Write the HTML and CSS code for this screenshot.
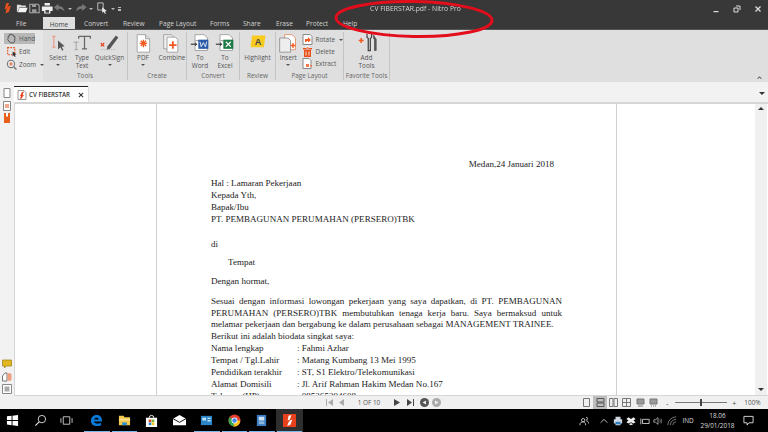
FILE: index.html
```html
<!DOCTYPE html>
<html lang="id">
<head>
<meta charset="utf-8">
<title>CV FIBERSTAR.pdf - Nitro Pro</title>
<link rel="stylesheet" href="styles.css">
</head>
<body>
<div class="app">
  <header class="titlebar">
    <div class="qat">
      <svg class="logo" viewBox="0 0 14 14"><path d="M6 1 9 1 7 7 4 8Z" fill="#e8501c"/><path d="M8 5 11 4 9 11 5 13 6 8Z" fill="#e8501c"/></svg>
      <svg viewBox="0 0 14 14"><path d="M1 3h4l1 1h5v2H4L2 11H1Z" fill="#ddd"/><path d="M4 6.500h9L11 11.500H2Z" fill="#f4f4f4"/></svg>
      <svg viewBox="0 0 14 14"><path d="M2 2.500h9l1.500 1.500v8h-10.500Z" fill="none" stroke="#aaa" stroke-width="1.200"/><path d="M4.500 2.500h4.500v3h-4.500ZM4.500 8h5v4h-5Z" fill="#999"/></svg>
      <svg viewBox="0 0 14 14"><path d="M4 1h6v3H4ZM1 5h12v5h-2.500v3h-7v-3H1Z" fill="#eee"/><path d="M5 9h4v3H5Z" fill="#444"/></svg>
      <svg viewBox="0 0 14 14"><path d="M1 6 6 2v2.500c4 0 6 2 7 6-2-2-4-3-7-3V10Z" fill="#777"/></svg>
      <span class="caret"></span>
      <svg viewBox="0 0 14 14"><path d="M13 6 8 2v2.500c-4 0-6 2-7 6 2-2 4-3 7-3V10Z" fill="#777"/></svg>
      <span class="caret"></span>
      <svg viewBox="0 0 14 14"><path d="M2 1h6v8H2Z" fill="none" stroke="#ccc"/><path d="M7 6l5 4-2 .5 1 2.500-1 .5-1.200-2.500L7 12Z" fill="#eee"/></svg>
      <span class="caret"></span>
      <span class="more"></span>
    </div>
    <div class="title">CV FIBERSTAR.pdf - Nitro Pro</div>
    <div class="winctl">
      <svg class="i10" viewBox="0 0 10 10"><path d="M2.500 7h5v1.200h-5Z" fill="#ddd"/></svg>
      <svg class="i10" viewBox="0 0 10 10"><path d="M4 2h4v4M2 4h4v4H2Z" fill="none" stroke="#ddd"/></svg>
      <svg class="i10" viewBox="0 0 10 10"><path d="M2.500 2.500l5 5M7.500 2.500l-5 5" stroke="#ddd" stroke-width="1.300"/></svg>
    </div>
  </header>

  <nav class="menubar">
    <span class="menu m-file">File</span>
    <span class="menu m-home">Home</span>
    <span class="menu m-convert">Convert</span>
    <span class="menu m-review">Review</span>
    <span class="menu m-layout">Page Layout</span>
    <span class="menu m-forms">Forms</span>
    <span class="menu m-share">Share</span>
    <span class="menu m-erase">Erase</span>
    <span class="menu m-protect">Protect</span>
    <span class="menu m-help">Help</span>
  </nav>

  <section class="ribbon">
    <div class="modes">
      <div class="mode active">
        <svg class="i11" viewBox="0 0 10 10"><path d="M2 5V3h1V1.500h1V1h1v.500h1V2h1v1h1v4l-1 2H4L1.500 6Z" fill="none" stroke="#555" stroke-width=".9"/></svg>Hand</div>
      <div class="mode">
        <svg class="i11" viewBox="0 0 10 10"><rect x="1.500" y="1.500" width="6.500" height="6.500" fill="none" stroke="#e8501c" stroke-dasharray="1.500 1"/><path d="M6 5l3.500 2.500-1.500.5.800 1.500-.8.400L7 8.500 6 9.500Z" fill="#333"/></svg>Edit</div>
      <div class="mode">
        <svg class="i11" viewBox="0 0 10 10"><circle cx="4.500" cy="4.500" r="3.300" fill="none" stroke="#777"/><path d="M7 7l2.500 2.500" stroke="#777" stroke-width="1.300"/><path d="M3 4.500h3M4.500 3v3" stroke="#e8501c" stroke-width=".8"/></svg>Zoom<span class="caret dark"></span></div>
    </div>

    <div class="group g-tools">
      <div class="btns">
        <div class="btn w-select">
          <svg class="i24" viewBox="0 0 24 24"><path d="M5 4h4M5 17h4M7 4v13" stroke="#ee8a70" stroke-width="1.100" fill="none"/><path d="M12 9l8 7-3.500.5 2 4-1.500.7-2-4-3 2.500Z" fill="#555"/></svg>
          <span>Select</span><span class="caret dark"></span></div>
        <div class="btn w-type">
          <svg class="i24" viewBox="0 0 24 24"><path d="M8 4h14v3M15 4v15M12 19h6M8 4v3" stroke="#666" stroke-width="1.500" fill="none"/><path d="M2 11h6M5 11v9M3 20h4" stroke="#999" fill="none"/></svg>
          <span>Type<br>Text</span></div>
        <div class="btn w-sign">
          <svg class="i24" viewBox="0 0 24 24"><path d="M9 16 19 3l3 2.500L12 19l-4 1Z" fill="#555"/><path d="M1 12l4 4M5 12l-4 4" stroke="#e8401c" stroke-width="1.400"/><path d="M1 20h18" stroke="#aaa" stroke-dasharray="1 1"/></svg>
          <span>QuickSign</span><span class="caret dark"></span></div>
      </div>
      <div class="glabel">Tools</div>
    </div>

    <div class="group g-create">
      <div class="btns">
        <div class="btn w-pdf">
          <svg class="i24" viewBox="0 0 24 24"><path d="M5 2h10l5 5v16H5Z" fill="#fff" stroke="#999"/><path d="M15 2v5h5" fill="#ddd" stroke="#999"/><path d="M12.500 8v9M8 12.500h9M9.300 9.300l6.400 6.400M15.700 9.300l-6.400 6.400" stroke="#f05a1e" stroke-width="1.600"/></svg>
          <span>PDF</span><span class="caret dark"></span></div>
        <div class="btn w-combine">
          <svg class="i24" viewBox="0 0 24 24"><path d="M2 2h9l2 2v15H2Z" fill="#eee" stroke="#999"/><path d="M6 5h10l3 3v15H6Z" fill="#fff" stroke="#999"/><path d="M13 10v9M8.500 14.500h9" stroke="#f05a1e" stroke-width="2.200"/></svg>
          <span>Combine</span></div>
      </div>
      <div class="glabel">Create</div>
    </div>

    <div class="group g-convert">
      <div class="btns">
        <div class="btn w-to">
          <svg class="i24" viewBox="0 0 24 24"><path d="M6 2h11l4 4v3H6Z" fill="#fff" stroke="#999"/><path d="M6 9v12h15v-3" fill="#fff" stroke="#999"/><path d="M1 13.500h6" stroke="#444" stroke-width="1.500"/><path d="M6 11l3 2.500-3 2.500Z" fill="#444"/><path d="M10 8h12v11H10Z" fill="#2b5aa8"/><path d="M12 10.500l1.500 6 2.500-5 2.500 5 1.500-6" stroke="#fff" fill="none"/></svg>
          <span>To<br>Word</span></div>
        <div class="btn w-to">
          <svg class="i24" viewBox="0 0 24 24"><path d="M6 2h11l4 4v3H6Z" fill="#fff" stroke="#999"/><path d="M6 9v12h15v-3" fill="#fff" stroke="#999"/><path d="M1 13.500h6" stroke="#444" stroke-width="1.500"/><path d="M6 11l3 2.500-3 2.500Z" fill="#444"/><path d="M10 8h12v11H10Z" fill="#1e7a45"/><path d="M13 10.500l6 6M19 10.500l-6 6" stroke="#fff" stroke-width="1.300"/></svg>
          <span>To<br>Excel</span></div>
      </div>
      <div class="glabel">Convert</div>
    </div>

    <div class="group g-review">
      <div class="btns">
        <div class="btn w-high">
          <svg class="i24" viewBox="0 0 24 24"><path d="M5 3h16l-2 14H3Z" fill="#f9cb20"/><text x="12" y="14" class="hl">A</text></svg>
          <span>Highlight</span></div>
      </div>
      <div class="glabel">Review</div>
    </div>

    <div class="group g-layout">
      <div class="btns">
        <div class="btn w-insert">
          <svg class="i24" viewBox="0 0 24 24"><path d="M8 2h9l4 4v14H8Z" fill="#fff" stroke="#e08a60"/><path d="M2 6h10l3 3v14H2Z" fill="#eee" stroke="#888"/><path d="M18 12v6M15 15h6" stroke="#f05a1e" stroke-width="1.600"/></svg>
          <span>Insert</span><span class="caret dark"></span></div>
        <div class="smalls">
          <div class="small"><svg class="i11" viewBox="0 0 11 11"><path d="M1 .500h7l2 2v8H1Z" fill="#fff" stroke="#888"/><path d="M3 8V5h3V3l3 3-3 2.500V7H4.500v1Z" fill="#f05a1e"/></svg>Rotate<span class="caret dark"></span></div>
          <div class="small"><svg class="i11" viewBox="0 0 11 11"><path d="M1 2h9v1.500H1ZM2 4h7v7H2Z" fill="#e8501c"/><path d="M4 5.500v4M7 5.500v4M4 .500h3V2H4Z" stroke="#fff" stroke-width=".8" fill="#e8501c"/></svg>Delete</div>
          <div class="small"><svg class="i11" viewBox="0 0 11 11"><path d="M1 .500h6l2 2v8H1Z" fill="#fff" stroke="#888"/><path d="M4 6h3v3H4ZM8 7h2v1.500H8Z" fill="#f0784a"/></svg>Extract</div>
        </div>
      </div>
      <div class="glabel">Page Layout</div>
    </div>

    <div class="group g-fav">
      <div class="btns">
        <div class="btn w-add">
          <svg class="i24" viewBox="0 0 24 24"><path d="M2 9h6M5 6v6" stroke="#f05a1e" stroke-width="1.800"/><path d="M12 1v4l1.500 1.500V21h2.500V6.500L17.500 5V1" stroke="#444" stroke-width="1.500" fill="none"/><path d="M20 2v5h1v14h2V7h0" stroke="#555" fill="#555"/></svg>
          <span>Add<br>Tools</span></div>
      </div>
      <div class="glabel">Favorite Tools</div>
    </div>
    <svg class="collapse" viewBox="0 0 6 4"><path d="M0 4 3 1l3 3H4.500L3 2.500 1.500 4Z" fill="#555"/></svg>
  </section>

  <div class="body-row">
    <aside class="rail">
      <div class="railset">
        <svg class="i10" viewBox="0 0 10 10"><path d="M2 .500h6v9H2Z" fill="#fff" stroke="#888"/></svg>
        <svg class="i10" viewBox="0 0 10 10"><path d="M1.500 .500h7v9h-7Z" fill="#fff" stroke="#888"/><path d="M3 4h4M3 6h4" stroke="#e8501c"/></svg>
        <svg class="i10" viewBox="0 0 10 10"><path d="M2 0h6v10H2Z" fill="#e8601c"/><path d="M4 0v4l1-1 1 1V0Z" fill="#fff"/></svg>
      </div>
      <div class="railset">
        <svg class="i10" viewBox="0 0 10 10"><path d="M.500 1h9v6H4L2.500 9V7H.500Z" fill="#e3b81f" stroke="#9a7c10" stroke-width=".7"/></svg>
        <svg class="i10" viewBox="0 0 10 10"><path d="M.500 4 3 1h2v8H.500Z" fill="#fff" stroke="#777"/><rect x="5.500" y="1" width="4" height="8" rx="2" fill="#f0a080"/></svg>
        <svg class="i10" viewBox="0 0 10 10"><path d="M.500.500h9v9h-9Z" fill="#fff" stroke="#888"/><path d="M2.500 2.500h5v5h-5Z" fill="#aaa"/></svg>
      </div>
    </aside>
    <div class="docarea">
      <div class="tabstrip">
        <div class="doctab">
          <svg class="i10" viewBox="0 0 10 10"><path d="M1 .500h6l2 2v7H1Z" fill="#fff" stroke="#999"/><path d="M5 2 7 1.500 5.500 5 7 5 4 9 3 8.500 4 6 3 6Z" fill="#e8401c"/></svg>
          <span>CV FIBERSTAR</span>
          <svg class="tabx" viewBox="0 0 7 7"><path d="M1 1l5 5M6 1l-5 5" stroke="#333" stroke-width="1.200"/></svg>
        </div>
        <span class="tabmenu"></span>
      </div>
      <div class="viewer">
        <div class="gutter"></div>
        <article class="page">
          <p class="date">Medan,24 Januari 2018</p>
          <p class="hal">Hal : Lamaran Pekerjaan</p>
          <p>Kepada Yth,</p>
          <p>Bapak/Ibu</p>
          <p>PT. PEMBAGUNAN PERUMAHAN (PERSERO)TBK</p>
          <p class="di">di</p>
          <p class="tempat">Tempat</p>
          <p class="hormat">Dengan hormat,</p>
          <p class="just first">Sesuai dengan informasi lowongan pekerjaan yang saya dapatkan, di PT. PEMBAGUNAN</p>
          <p class="just">PERUMAHAN (PERSERO)TBK membutuhkan tenaga kerja baru. Saya bermaksud untuk</p>
          <p>melamar pekerjaan dan bergabung ke dalam perusahaan sebagai MANAGEMENT TRAINEE.</p>
          <p>Berikut ini adalah biodata singkat saya:</p>
          <dl class="bio">
            <dt>Nama lengkap</dt><dd>: Fahmi Azhar</dd>
            <dt>Tempat / Tgl.Lahir</dt><dd>: Matang Kumbang 13 Mei 1995</dd>
            <dt>Pendidikan terakhir</dt><dd>: ST, S1 Elektro/Telekomunikasi</dd>
            <dt>Alamat Domisili</dt><dd>: Jl. Arif Rahman Hakim Medan No.167</dd>
            <dt>Telepon (HP)</dt><dd>: 085265294608</dd>
          </dl>
        </article>
        <div class="gutter right"></div>
        <div class="scroll">
          <span class="arr up"></span>
          <span class="arr down"></span>
        </div>
      </div>
    </div>
  </div>

  <footer class="status">
    <div class="pager">
      <svg class="i9" viewBox="0 0 9 9"><path d="M1 1h1v7H1ZM8 1v7L3 4.500Z" fill="#aaa"/></svg>
      <svg class="i9" viewBox="0 0 9 9"><path d="M7 1v7L2 4.500Z" fill="#aaa"/></svg>
      <span class="pagenum">1 OF 10</span>
      <svg class="i9 gapped" viewBox="0 0 9 9"><path d="M2 1v7l6-3.500Z" fill="#444"/></svg>
      <svg class="i9 gapped" viewBox="0 0 9 9"><path d="M1 1v7l5-3.500ZM7 1h1v7H7Z" fill="#444"/></svg>
      <svg class="i9" viewBox="0 0 9 9"><circle cx="4.500" cy="4.500" r="4.500" fill="#555"/><path d="M6 2.500v4L2.500 4.500Z" fill="#eee"/></svg>
      <svg class="i9" viewBox="0 0 9 9"><circle cx="4.500" cy="4.500" r="4.500" fill="#aaa"/><path d="M3 2.500v4l3.500-2Z" fill="#eee"/></svg>
    </div>
    <div class="views">
      <span class="v"><svg class="i9" viewBox="0 0 9 9"><path d="M1.500.500h6v8h-6Z" fill="none" stroke="#777"/></svg></span>
      <span class="v on"><svg class="i9" viewBox="0 0 9 9"><path d="M1 .500h7v3.500H1ZM1 5h7v3.500H1Z" fill="none" stroke="#555"/></svg></span>
      <span class="v"><svg class="i9" viewBox="0 0 9 9"><path d="M.500.500h3.500v8H.500ZM5 .500h3.500v8H5Z" fill="none" stroke="#777"/></svg></span>
      <span class="v"><svg class="i9" viewBox="0 0 9 9"><path d="M.500.500h8v8h-8ZM.500 4.500h8M4.500.500v8" fill="none" stroke="#777"/></svg></span>
      <span class="v"><svg class="i9" viewBox="0 0 9 9"><path d="M1 1h7v5H1Z" fill="#999" stroke="#777"/><path d="M2 8h5" stroke="#777"/></svg></span>
      <span class="v"><svg class="i9" viewBox="0 0 9 9"><path d="M1 1h7v5H1Z" fill="#999" stroke="#777"/><path d="M2 8h1M4 8h1M6 8h1" stroke="#777"/></svg></span>
    </div>
    <div class="zoom">
      <span class="zs">-</span>
      <span class="track"><span class="thumb"></span></span>
      <span class="zs">+</span>
      <span class="pct">100%</span>
    </div>
  </footer>

  <footer class="taskbar">
    <svg class="tb t-start" viewBox="0 0 14 14"><path d="M1 2.500 6 2v4.500H1ZM7 1.800 13 1v5.500H7ZM1 7.500h5V12l-5-.6ZM7 7.500h6V13l-6-.8Z" fill="#fff"/></svg>
    <svg class="tb t-search" viewBox="0 0 14 14"><circle cx="8.500" cy="5.500" r="4" fill="none" stroke="#ddd"/><path d="M5.500 8.500 1.500 12.500" stroke="#ddd" stroke-width="1.300"/></svg>
    <svg class="tb t-view" viewBox="0 0 14 14"><path d="M3.500 3h7v8h-7ZM1 4.500v5M13 4.500v5" fill="none" stroke="#ccc"/></svg>
    <span class="app-slot run"><svg class="tb" viewBox="0 0 14 14"><path d="M1 7.500C1 3 4 1 7.500 1 11 1 13 3.500 13 8H4.500c.3 2.500 4.500 3 7.500 1.300V12c-3.500 1.700-11 1.500-11-4.500ZM4.500 5.800h5C9.300 3.500 5 3.500 4.500 5.800Z" fill="#0a78d7"/></svg></span>
    <span class="app-slot run"><svg class="tb" viewBox="0 0 14 14"><path d="M1 2h5l1 1.500h6V12H1Z" fill="#f3c94d"/><path d="M1 5h12v2H1Z" fill="#f9e08e"/><path d="M4.500 9h5v3h-5Z" fill="#2c8fd8"/></svg></span>
    <span class="app-slot"><svg class="tb" viewBox="0 0 14 14"><path d="M1 4h12v10H1Z" fill="#fff"/><path d="M4.500 4a2.500 2.500 0 0 1 5 0" fill="none" stroke="#fff"/><path d="M4 6h2.800v2.800H4Z" fill="#e8401c"/><path d="M7.200 6H10v2.800H7.200Z" fill="#6cb83a"/><path d="M4 9.200h2.800V12H4Z" fill="#1e88d8"/><path d="M7.200 9.200H10V12H7.200Z" fill="#f9c30f"/></svg></span>
    <span class="app-slot"><svg class="tb" viewBox="0 0 14 14"><path d="M0 5 7 1l7 4v7H0Z" fill="#fff"/><path d="M0 5l7 4 7-4" fill="none" stroke="#000"/></svg></span>
    <span class="app-slot run"><svg class="tb" viewBox="0 0 14 14"><path d="M1 2h12v10H1Z" fill="#2a84c8"/><path d="M2.500 4h4v3h-4ZM8 4h3.500v1.500H8ZM8 6.500h3.500V8H8Z" fill="#bfe0f5"/></svg></span>
    <span class="app-slot run"><svg class="tb" viewBox="0 0 14 14"><circle cx="7" cy="7" r="6.500" fill="#e0402f"/><path d="M7 7 1.600 3.500A6.500 6.500 0 0 0 6 13.400Z" fill="#34a853"/><path d="M7 7h6.200A6.500 6.500 0 0 1 6 13.400Z" fill="#f8c61b"/><circle cx="7" cy="7" r="3.200" fill="#fff"/><circle cx="7" cy="7" r="2.400" fill="#4285f4"/></svg></span>
    <span class="app-slot run"><svg class="tb" viewBox="0 0 14 14"><path d="M2 1h10v12H2Z" fill="#3b7cc4"/><path d="M4 3h6v4H4Z" fill="#cfe2f3"/><path d="M4 8h6v3H4Z" fill="#8fb8de"/></svg></span>
    <span class="app-slot active run"><svg class="tb" viewBox="0 0 14 14"><path d="M0 0h14v14H0Z" fill="#e8401c"/><path d="M6 2 9 1 7.500 6 5 7ZM7.500 7 10 6 8 11.500 4.500 13 6 9Z" fill="#fff"/></svg></span>
    <div class="tray">
      <svg class="tr" viewBox="0 0 12 12"><circle cx="5" cy="5" r="2" fill="none" stroke="#ddd"/><path d="M1 11c0-3 2-4 4-4s3 1.500 3 4M8.500 1.500a1.700 1.700 0 1 1 0 3.400M9 6c1.500 0 2.500 1 2.500 3" fill="none" stroke="#ddd"/></svg>
      <svg class="tr chev" viewBox="0 0 12 12"><path d="M2 8l4-4 4 4" fill="none" stroke="#ddd"/></svg>
      <svg class="tr" viewBox="0 0 12 12"><path d="M3 1h6v3H3ZM1 4h10v5H9v2H3V9H1Z" fill="#cfd8e0"/><path d="M3 7h6v3H3Z" fill="#2c7dc0"/></svg>
      <svg class="tr" viewBox="0 0 12 12"><path d="M3 1.500 6 3.500 9 1.500 11.500 3.500 9 5.500 11.500 7.500 9 9 6 7.500 3 9 .500 7.500 3 5.500 .500 3.500ZM6 8.500l2.500 1.300L6 11 3.500 9.800Z" fill="#eee"/></svg>
      <svg class="tr" viewBox="0 0 12 12"><path d="M3 4h8v5H3ZM1 3v7" fill="none" stroke="#ddd"/></svg>
      <svg class="tr" viewBox="0 0 12 12"><path d="M1 4.500h2L6 2v8L3 7.500H1Z" fill="none" stroke="#ddd" stroke-width=".8"/><path d="M8 4a3 3 0 0 1 0 4M9.500 3a5 5 0 0 1 0 6" fill="none" stroke="#999" stroke-width=".8"/></svg>
      <svg class="tr" viewBox="0 0 12 12"><path d="M1 11a10 10 0 0 1 10-10M4 11a7 7 0 0 1 7-7M7 11a4 4 0 0 1 4-4" fill="none" stroke="#888"/></svg>
      <span class="lang">IND</span>
      <div class="clock"><span>18.06</span><span>29/01/2018</span></div>
      <svg class="tr note" viewBox="0 0 12 12"><path d="M1 1.500h10v7H6.500L4.500 11V8.500H1Z" fill="none" stroke="#ddd"/></svg>
    </div>
  </footer>

  <svg class="ring" viewBox="0 0 164 44"><ellipse cx="82" cy="21" rx="78" ry="17.500" fill="none" stroke="#e30d1b" stroke-width="3" transform="rotate(1 82 21)"/></svg>
</div>
</body>
</html>
```

FILE: styles.css
```css
* { box-sizing: border-box; }
html, body { margin: 0; height: 100%; overflow: hidden; background: #000; }
p, dl, dd { margin: 0; }
svg { display: block; flex: none; }

.app {
  position: relative;
  display: flex;
  flex-direction: column;
  width: 768px;
  height: 432px;
  overflow: hidden;
  font-family: "Open Sans", "Noto Sans", sans-serif;
  font-size: 6.400px;
  color: #555;
  filter: blur(.3px);
}

.i9 { width: 9px; height: 9px; }
.i10 { width: 10px; height: 10px; }
.i11 { width: 11px; height: 11px; }
.i24 { width: 20px; height: 20px; }

.caret {
  width: 0; height: 0;
  border: 2px solid transparent;
  border-top: 2.500px solid #bbb;
  border-bottom: 0;
  flex: none;
}
.caret.dark { border-top-color: #555; }

/* title bar */
.titlebar {
  height: 16px;
  background: #383838;
  display: flex;
  align-items: center;
  padding-top: 1px;
  position: relative;
}
.qat { display: flex; align-items: center; padding-left: 1px; width: 336px; }
.qat svg { width: 12.500px; height: 12.500px; }
.qat .logo { margin-right: 2px; }
.qat .caret { margin: 0 3px 0 2px; }
.more { width: 3px; height: 4px; border-top: 1px solid #bbb; border-bottom: 2px solid #bbb; }
.title { width: 158px; text-align: center; color: #d6d6d6; font-size: 6.800px; padding-left: 1px; }
.winctl { margin-left: auto; display: flex; gap: 11px; padding-right: 5px; }

.menubar {
  height: 14px;
  background: #383838;
  display: flex;
  align-items: stretch;
  padding-left: 16px;
  color: #d2d2d2;
  font-size: 6.600px;
}
.menu { display: flex; align-items: center; padding-top: 1px; }
.m-file { width: 27px; }
.m-home {
  width: 32px;
  justify-content: center;
  background: #dfdfdf;
  color: #444;
  margin-top: 1px;
}
.m-convert { margin-left: 9px; width: 39px; }
.m-review { width: 36px; }
.m-layout { width: 51px; }
.m-forms { width: 33px; }
.m-share { width: 33px; }
.m-erase { width: 30px; }
.m-protect { width: 37px; }

/* ribbon */
.ribbon {
  height: 53px;
  background: #dfdfdf;
  display: flex;
  position: relative;
  border-top: 1px solid #555;
  margin-top: -1px;
}
.modes {
  width: 43px;
  background: #e6e6e6;
  padding: 3px 0 0 4px;
  display: flex;
  flex-direction: column;
  gap: 2px;
}
.mode { display: flex; align-items: center; gap: 2px; height: 11px; padding-left: 2px; width: 31px; white-space: nowrap; }
.mode .caret { margin-left: 2px; }
.mode.active { background: #b8b8b8; }
.group {
  display: flex;
  flex-direction: column;
  border-right: 1px solid #c4c4c4;
  margin: 2px 0;
}
.btns { flex: 1; display: flex; }
.btn {
  display: flex;
  flex-direction: column;
  align-items: center;
  padding-top: 1px;
  line-height: 7.500px;
  text-align: center;
  white-space: nowrap;
}
.btn .i24 { margin-bottom: 1px; }
.btn .caret { margin-top: 2px; }
.glabel { height: 9px; line-height: 9px; text-align: center; white-space: nowrap; color: #666; }

.g-tools { width: 85px; }
.g-create { width: 59px; }
.g-convert { width: 53px; }
.g-review { width: 36px; }
.g-layout { width: 68px; }
.g-fav { width: 46px; }
.w-select { width: 29px; padding-left: 1px; }
.w-type { width: 20px; }
.w-sign { width: 35px; }
.w-pdf { width: 30px; }
.w-combine { width: 28px; }
.w-to { width: 25px; padding-left: 1px; }
.w-high { width: 35px; }
.w-insert { width: 29px; }
.w-add { width: 45px; }
.smalls { display: flex; flex-direction: column; gap: 1px; padding: 2px 0 0 1px; }
.small { display: flex; align-items: center; gap: 3px; height: 11px; white-space: nowrap; }
.small .caret { margin-left: 1px; }
.hl { font: bold 11px "Liberation Sans", sans-serif; fill: #444; text-anchor: middle; }
.collapse { position: absolute; right: 6px; bottom: 3px; width: 5px; height: 4px; }

/* body */
.body-row { height: 314px; display: flex; background: #f2f2f2; }
.rail {
  width: 14px;
  padding: 6px 0 2px 2px;
  display: flex;
  flex-direction: column;
  justify-content: space-between;
}
.railset { display: flex; flex-direction: column; gap: 2.500px; }
.docarea { flex: 1; min-width: 0; display: flex; flex-direction: column; }

/* tab strip */
.tabstrip {
  height: 20px;
  display: flex;
  align-items: flex-end;
  position: relative;
}
.doctab {
  height: 16px;
  width: 74px;
  background: #fff;
  border-top: 1px solid #222;
  display: flex;
  align-items: center;
  padding-left: 3px;
  gap: 2px;
  color: #333;
  font-weight: 600;
  font-size: 6.200px;
  white-space: nowrap;
  box-shadow: 1px 0 0 #ddd;
}
.tabx { width: 6px; height: 6px; margin-left: 6px; }
.tabmenu {
  position: absolute;
  right: 3px;
  top: 10px;
  border: 3px solid transparent;
  border-top: 3px solid #333;
  border-bottom: 0;
}

/* viewer */
.viewer {
  flex: 1;
  min-height: 0;
  display: flex;
  background: #fff;
  border: 1px solid #d6d6d6;
  border-top-width: 2px;
  border-right: 0;
  overflow: hidden;
}
.gutter { width: 142px; background: #fff; flex: none; border-right: 1px solid #d0d0d0; }
.gutter.right { width: 139px; border-right: 0; border-left: 1px solid #d0d0d0; }
.page {
  width: 459px;
  flex: none;
  padding: 55px 54px 0;
  background: #fff;
  font-family: "Liberation Serif", "Times New Roman", serif;
  font-size: 9.050px;
  line-height: 11.850px;
  color: #1c1c1c;
  white-space: nowrap;
}
.date { text-align: right; padding-right: 8px; }
.hal { margin-top: 7.500px; }
.di { margin-top: 13px; }
.tempat { margin-top: 6.500px; padding-left: 17px; }
.hormat { margin-top: 7px; }
.first { margin-top: 8px; }
.just { text-align: justify; text-align-last: justify; }
.bio { display: grid; grid-template-columns: 86px 1fr; }
.scroll {
  width: 12px;
  flex: none;
  background: #f0f0f0;
  display: flex;
  flex-direction: column;
  justify-content: space-between;
  align-items: center;
  padding: 3px 0 4px;
}
.arr { border: 3px solid transparent; }
.arr.up { border-bottom: 3px solid #333; border-top: 0; }
.arr.down { border-top: 3px solid #333; border-bottom: 0; }

/* status bar */
.status {
  height: 13px;
  background: #f0f0f0;
  display: flex;
  align-items: center;
  position: relative;
  color: #555;
}
.pager { display: flex; align-items: center; gap: 3px; margin-left: 325px; width: 255px; }
.pagenum { width: 40px; text-align: center; }
.gapped { margin-right: 2px; }
.views { display: flex; }
.v { width: 13.400px; height: 13px; display: flex; align-items: center; justify-content: center; }
.v.on { background: #bdbdbd; }
.zoom { display: flex; align-items: center; margin-left: 4px; }
.zs { width: 6px; text-align: center; font-size: 8px; line-height: 8px; }
.track { width: 52px; height: 1px; background: #777; margin: 0 4px 0 5px; position: relative; }
.thumb { position: absolute; left: 25px; top: -3px; width: 2px; height: 7px; background: #444; }
.pct { margin-left: 7px; }

/* taskbar */
.taskbar {
  height: 23px;
  background: #000;
  display: flex;
  align-items: center;
  position: relative;
}
.tb { width: 13px; height: 13px; }
.t-start { margin-left: 6px; }
.t-search { margin-left: 15px; }
.t-view { margin-left: 13px; margin-right: 10px; }
.app-slot {
  width: 27.500px;
  height: 23px;
  display: flex;
  align-items: center;
  justify-content: center;
  position: relative;
}
.app-slot.run::after {
  content: "";
  position: absolute;
  left: 1px;
  right: 1px;
  bottom: 0;
  height: 1px;
  background: #76b9ed;
}
.app-slot.active { background: #2e2e2e; }
.tray { margin-left: auto; display: flex; align-items: center; color: #ddd; }
.tr { width: 10px; height: 10px; margin-right: 3.500px; }
.chev { margin-left: 7px; }
.lang { margin-left: 2.500px; width: 13px; }
.clock { display: flex; flex-direction: column; align-items: center; line-height: 10px; width: 44px; padding-top: 1px; }
.note { margin: 0 14px 0 3.500px; width: 11px; height: 11px; }

.ring {
  position: absolute;
  left: 332px;
  top: -2px;
  width: 164px;
  height: 44px;
  pointer-events: none;
}
```
